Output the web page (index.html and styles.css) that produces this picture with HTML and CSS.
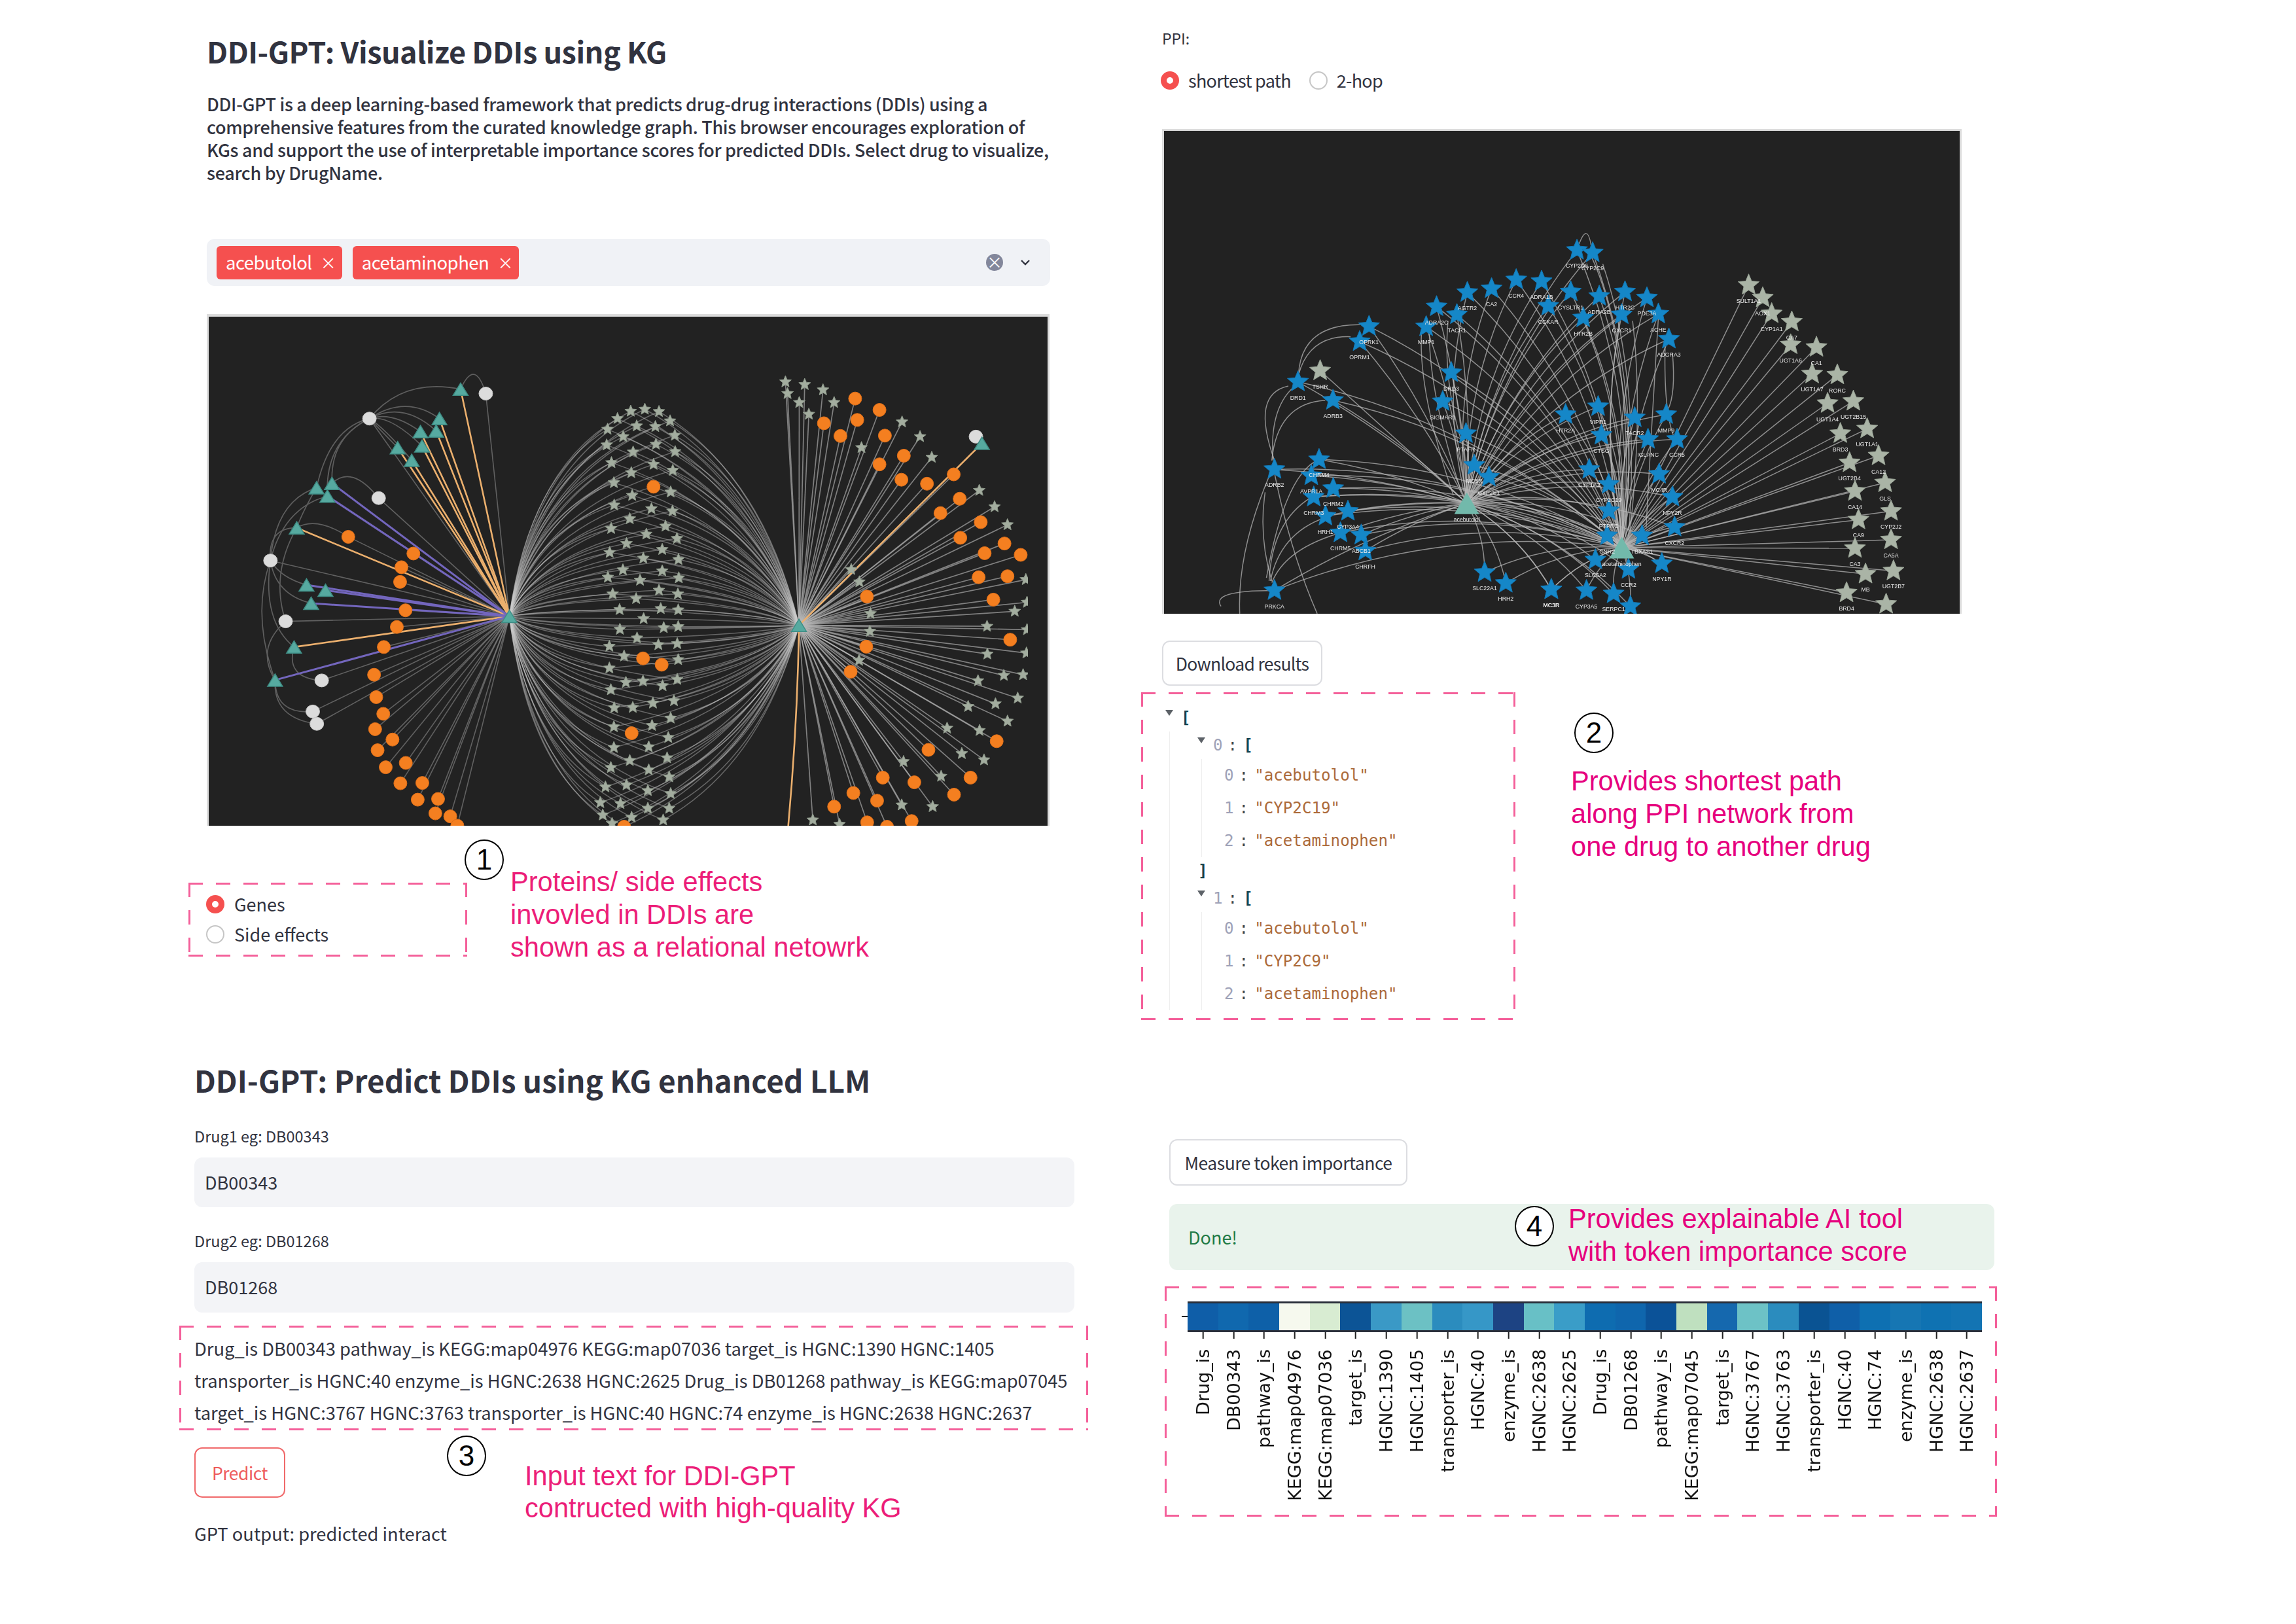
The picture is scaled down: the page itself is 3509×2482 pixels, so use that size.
FILE: index.html
```html
<!DOCTYPE html>
<html lang="en">
<head>
<meta charset="utf-8">
<title>DDI-GPT</title>
<link rel="stylesheet" href="styles.css">
</head>
<body>
<main class="page">

  <section class="cell cell-tl">
    <h2 class="title title-a">DDI-GPT: Visualize DDIs using KG</h2>
    <p class="intro">DDI-GPT is a deep learning-based framework that predicts drug-drug interactions (DDIs) using a<br>comprehensive features from the curated knowledge graph. This browser encourages exploration of<br>KGs and support the use of interpretable importance scores for predicted DDIs. Select drug to visualize,<br>search by DrugName.</p>
    <div class="select">
      <span class="tag">acebutolol<span class="tag-x">×</span></span>
      <span class="tag">acetaminophen<span class="tag-x">×</span></span>
      <span class="select-clear">×</span>
      <svg class="chevron" viewBox="0 0 16 10" width="16" height="10"><path d="M2 2l6 6 6-6" fill="none" stroke="#31333f" stroke-width="2.4"/></svg>
    </div>
    <div class="graph-frame graph-frame-a">
      <svg id="graph-genes" class="graph" viewBox="0 0 1282 778" width="1282" height="778"></svg>
    </div>
    <div class="annot-row annot-row-1">
      <div class="dash radios-box">
        <label class="radio"><span class="dot dot-on"></span>Genes</label>
        <label class="radio"><span class="dot"></span>Side effects</label>
      </div>
      <span class="num num-1">1</span>
      <p class="note note-a note-1">Proteins/ side effects<br>invovled in DDIs are<br>shown as a relational netowrk</p>
    </div>
  </section>

  <section class="cell cell-tr">
    <div class="ppi-label">PPI:</div>
    <div class="radio-line">
      <label class="radio"><span class="dot dot-on"></span>shortest path</label>
      <label class="radio"><span class="dot"></span>2-hop</label>
    </div>
    <div class="graph-frame graph-frame-b">
      <svg id="graph-ppi" class="graph" viewBox="0 0 1216 738" width="1216" height="738"></svg>
    </div>
    <button class="btn btn-download" type="button">Download results</button>
    <div class="annot-row annot-row-2">
      <div class="dash json">
        <div class="jrow jparent"><span class="jtoggle"></span><span class="jbr">[</span></div>
        <div class="jgroup jgroup-outer">
          <div class="jrow jparent"><span class="jtoggle"></span><span class="jidx">0</span><span class="jcolon">:</span><span class="jbr">[</span></div>
          <div class="jgroup jgroup-inner">
            <div class="jrow"><span class="jidx">0</span><span class="jcolon">:</span><span class="jstr">"acebutolol"</span></div>
            <div class="jrow"><span class="jidx">1</span><span class="jcolon">:</span><span class="jstr">"CYP2C19"</span></div>
            <div class="jrow"><span class="jidx">2</span><span class="jcolon">:</span><span class="jstr">"acetaminophen"</span></div>
          </div>
          <div class="jrow jclose"><span class="jbr">]</span></div>
          <div class="jrow jparent"><span class="jtoggle"></span><span class="jidx">1</span><span class="jcolon">:</span><span class="jbr">[</span></div>
          <div class="jgroup jgroup-inner">
            <div class="jrow"><span class="jidx">0</span><span class="jcolon">:</span><span class="jstr">"acebutolol"</span></div>
            <div class="jrow"><span class="jidx">1</span><span class="jcolon">:</span><span class="jstr">"CYP2C9"</span></div>
            <div class="jrow"><span class="jidx">2</span><span class="jcolon">:</span><span class="jstr">"acetaminophen"</span></div>
          </div>
        </div>
      </div>
      <span class="num num-2">2</span>
      <p class="note note-b note-2">Provides shortest path<br>along PPI network from<br>one drug to another drug</p>
    </div>
  </section>

  <section class="cell cell-bl">
    <h2 class="title title-b">DDI-GPT: Predict DDIs using KG enhanced LLM</h2>
    <div class="field-label field-label-1">Drug1 eg: DB00343</div>
    <div class="input">DB00343</div>
    <div class="field-label field-label-2">Drug2 eg: DB01268</div>
    <div class="input input-2">DB01268</div>
    <div class="dash prompt">Drug_is DB00343 pathway_is KEGG:map04976 KEGG:map07036 target_is HGNC:1390 HGNC:1405<br>transporter_is HGNC:40 enzyme_is HGNC:2638 HGNC:2625 Drug_is DB01268 pathway_is KEGG:map07045<br>target_is HGNC:3767 HGNC:3763 transporter_is HGNC:40 HGNC:74 enzyme_is HGNC:2638 HGNC:2637</div>
    <div class="predict-row">
      <div class="predict-col">
        <button class="btn btn-predict" type="button">Predict</button>
        <div class="output">GPT output: predicted interact</div>
      </div>
      <span class="num num-3">3</span>
      <p class="note note-a note-3">Input text for DDI-GPT<br>contructed with high-quality KG</p>
    </div>
  </section>

  <section class="cell cell-br">
    <button class="btn btn-measure" type="button">Measure token importance</button>
    <div class="done">
      <span class="done-text">Done!</span>
      <span class="num num-4">4</span>
      <p class="note note-b note-4">Provides explainable AI tool<br>with token importance score</p>
    </div>
    <div class="dash heat-box">
      <div class="heat-bar">
        <i style="background:#0f5ea8"></i><i style="background:#1068ae"></i><i style="background:#0e60a8"></i><i style="background:#f6f9ee"></i><i style="background:#d8ecd2"></i><i style="background:#0c5496"></i><i style="background:#3a99c6"></i><i style="background:#6cc1c4"></i><i style="background:#2b8cbe"></i><i style="background:#3697c7"></i><i style="background:#1d4383"></i><i style="background:#68c0c6"></i><i style="background:#3a9dc8"></i><i style="background:#0e6cb0"></i><i style="background:#0f66ad"></i><i style="background:#0b5298"></i><i style="background:#bfe0bf"></i><i style="background:#1568ae"></i><i style="background:#6dc2c6"></i><i style="background:#2b8cbe"></i><i style="background:#0a5393"></i><i style="background:#0f5fa8"></i><i style="background:#0e70b2"></i><i style="background:#1676b3"></i><i style="background:#0f72b2"></i><i style="background:#1374b3"></i>
      </div>
      <div class="heat-ticks">
        <span>Drug_is</span><span>DB00343</span><span>pathway_is</span><span>KEGG:map04976</span><span>KEGG:map07036</span><span>target_is</span><span>HGNC:1390</span><span>HGNC:1405</span><span>transporter_is</span><span>HGNC:40</span><span>enzyme_is</span><span>HGNC:2638</span><span>HGNC:2625</span><span>Drug_is</span><span>DB01268</span><span>pathway_is</span><span>KEGG:map07045</span><span>target_is</span><span>HGNC:3767</span><span>HGNC:3763</span><span>transporter_is</span><span>HGNC:40</span><span>HGNC:74</span><span>enzyme_is</span><span>HGNC:2638</span><span>HGNC:2637</span>
      </div>
    </div>
  </section>

</main>
<script src="script.js"></script>
</body>
</html>
```
FILE: styles.css
```css
* { box-sizing: border-box; }
html, body { margin: 0; padding: 0; background: #fff; }
body { font-family: "Noto Sans CJK SC", "Noto Sans", sans-serif; color: #31333f; }

.page {
  --pink: #f4609a;
  width: 3509px;
  height: 2482px;
  overflow: hidden;
  display: grid;
  grid-template-columns: 1744px 1fr;
  grid-template-rows: 1610px 1fr;
}

.cell { position: relative; min-width: 0; }
.cell-tl { padding: 48px 0 0 316px; }
.cell-tr { padding: 43px 0 0 32px; }
.cell-bl { padding: 10px 0 0 297px; }
.cell-br { padding: 131px 0 0 43px; }

.title {
  margin: 0;
  line-height: 60px;
  font-weight: 600;
  white-space: nowrap;
}
.title-a { font-size: 45px; letter-spacing: -0.5px; }
.title-b { font-size: 46px; }

.intro {
  margin: 33px 0 0;
  font-size: 27px;
  letter-spacing: -0.32px;
  line-height: 35px;
  font-weight: 500;
  white-space: nowrap;
}

/* multiselect */
.select {
  margin-top: 84px;
  width: 1289px;
  height: 72px;
  border-radius: 12px;
  background: #f0f2f6;
  display: flex;
  align-items: center;
  gap: 16px;
  padding: 0 30px 0 15px;
}
.tag {
  height: 51px;
  border-radius: 6px;
  background: #f5504f;
  color: #fff;
  font-size: 27.5px;
  letter-spacing: -0.5px;
  line-height: 49px;
  padding: 0 9px 0 14px;
  display: flex;
  gap: 13px;
}
.tag-x { font-size: 24px; letter-spacing: 0; }
.select-clear {
  margin-left: auto;
  width: 26px;
  height: 26px;
  border-radius: 50%;
  background: #83879b;
  color: #fff;
  font-size: 24px;
  line-height: 24px;
  text-align: center;
}
.chevron { margin-left: 10px; flex: none; }

/* graph frames */
.graph-frame { background: #222; border: 3px solid #dcdcdc; border-bottom: 0; }
.graph-frame-a { margin-top: 43px; width: 1288px; border-left-width: 3px; border-top-width: 4px; }
.graph-frame-b { margin-top: 60px; width: 1222px; }
.graph { display: block; filter: blur(0.45px); }

.e-thin  { fill: none; stroke: rgba(150,150,150,.55); stroke-width: 1.6; }
.e-field { fill: none; stroke: rgba(205,205,205,.4); stroke-width: 1.5; }
.e-fan   { fill: none; stroke: rgba(185,185,185,.62); stroke-width: 1.7; }
.e-curve { fill: none; stroke: #5e5e5e; stroke-width: 1.7; }
.e-gold  { fill: none; stroke: #ecb06e; stroke-width: 2.6; }
.e-purple{ fill: none; stroke: #7366bd; stroke-width: 3; }
.e-ppi   { fill: none; stroke: rgba(185,185,185,.72); stroke-width: 1.5; }

.n-tri    { fill: #56aaa0; stroke: #3f8d85; stroke-width: 1.5; }
.n-hub    { fill: #72b9ab; stroke: none; }
.n-white  { fill: #dcdcdc; stroke: #c9c9c9; stroke-width: 1; }
.n-orange { fill: #f47f20; stroke: #e0701a; stroke-width: 1; }
.n-sage   { fill: #a3ad9f; stroke: #8e998b; stroke-width: 1; }
.n-blue   { fill: #1587c8; stroke: #1378b6; stroke-width: 1; }
.n-sage-l { fill: #aab4a6; stroke: #98a295; stroke-width: 1; }
.n-label  { font: 8.8px "Liberation Sans", Arial, sans-serif; fill: #ececec; text-anchor: middle; }

/* dashed annotation boxes */
.dash {
  --on: 22px;
  --off: 42px;
  background:
    repeating-linear-gradient(90deg, var(--pink) 0 var(--on), transparent var(--on) var(--off)) left top / 100% 3px no-repeat,
    repeating-linear-gradient(90deg, var(--pink) 0 var(--on), transparent var(--on) var(--off)) left bottom / 100% 3px no-repeat,
    repeating-linear-gradient(180deg, var(--pink) 0 var(--on), transparent var(--on) var(--off)) left top / 3px 100% no-repeat,
    repeating-linear-gradient(180deg, var(--pink) 0 var(--on), transparent var(--on) var(--off)) right top / 3px 100% no-repeat;
}

.annot-row { position: relative; display: flex; align-items: flex-start; }
.annot-row-1 { margin: 87px 0 0 -28px; }
.annot-row-2 { margin: 10px 0 0 -32px; }

.num {
  position: absolute;
  width: 60px;
  height: 62px;
  border: 2.5px solid #000;
  border-radius: 50%;
  background: #fff;
  color: #000;
  font: 44px/57px "Liberation Sans", Arial, sans-serif;
  text-align: center;
}
.num-1 { left: 422px; top: -66px; }
.num-2 { left: 662px; top: 31px; }
.num-3 { left: 386px; top: -18px; }
.num-4 { left: 528px; top: 3px; }

.note {
  margin: 0;
  font-family: "Liberation Sans", Arial, sans-serif;
  font-size: 41.6px;
  line-height: 50px;
  white-space: nowrap;
}
.note-a { color: #ec1e79; }
.note-b { color: #e6007e; }
.note-1 { margin: -26px 0 0 66px; }
.note-2 { margin: 111px 0 0 85px; }
.note-3 { margin: 19px 0 0 366px; line-height: 49px; }
.note-4 { position: absolute; left: 610px; top: -2px; }

/* radios */
.radios-box { width: 426px; height: 113px; padding: 19px 0 0 27px; display: flex; flex-direction: column; gap: 18px; }
.radio { display: flex; align-items: center; gap: 15px; font-size: 27px; line-height: 28px; height: 28px; white-space: nowrap; }
.dot { width: 28px; height: 28px; border-radius: 50%; border: 2px solid #c6c6c6; background: #fff; flex: none; }
.dot-on { border: 9px solid #f5504f; background: #fff; }
.ppi-label { font-size: 23px; line-height: 30px; }
.radio-line { margin-top: 36px; display: flex; gap: 28px; letter-spacing: -0.75px; }
.radio-line .radio { gap: 14px; }
.radio-line .dot-on { margin-left: -2px; }

/* buttons */
.btn {
  display: block;
  font-family: inherit;
  font-size: 26.5px;
  letter-spacing: -0.5px;
  color: #31333f;
  background: #fff;
  border: 2px solid #dcdde1;
  border-radius: 12px;
  padding: 0;
  white-space: nowrap;
}
.btn-download { margin-top: 41px; width: 245px; height: 69px; letter-spacing: -0.7px; }
.btn-measure { width: 364px; height: 71px; }
.btn-predict { width: 139px; height: 77px; color: #ee5c5c; border-color: #f0696a; }

/* json viewer */
.json { width: 572px; height: 501px; padding: 18px 0 0 43px; font: 24.2px "DejaVu Sans Mono", "Liberation Mono", monospace; }
.jrow { display: flex; align-items: center; height: 50px; white-space: nowrap; }
.jparent, .jclose { height: 42px; }
.jclose { margin-left: -5px; }
.jgroup { border-left: 1px solid #eeeeee; }
.jgroup-outer { padding-left: 48px; }
.jgroup-inner { padding-left: 34px; }
.jtoggle {
  width: 0; height: 0; flex: none;
  margin: -16px 12px 0 -6px;
  border-left: 6px solid transparent;
  border-right: 6px solid transparent;
  border-top: 9px solid #5d6268;
}
.jbr { color: #14424f; font-weight: 700; }
.jidx { color: #9ea2b8; }
.jcolon { margin: 0 9px 0 8px; color: #444; }
.jstr { color: #ac6a3a; }

/* predict form */
.field-label { font-size: 23.5px; line-height: 30px; white-space: nowrap; }
.field-label-1 { margin-top: 41px; }
.field-label-2 { margin-top: 36px; }
.input {
  margin-top: 18px;
  width: 1345px;
  height: 76px;
  border-radius: 12px;
  background: #f3f4f7;
  padding-left: 16px;
  font-size: 27px;
  line-height: 76px;
}
.input-2 { height: 77px; line-height: 75px; }
.prompt {
  margin: 20px 0 0 -23px;
  width: 1389px;
  height: 160px;
  padding: 10px 0 0 23px;
  font-size: 27.35px;
  line-height: 49px;
  white-space: nowrap;
}
.predict-row { position: relative; margin-top: 26px; display: flex; align-items: flex-start; }
.predict-col { flex: none; width: 139px; }
.output { margin-top: 39px; font-size: 27.3px; line-height: 30px; white-space: nowrap; }

/* token importance */
.done {
  position: relative;
  margin-top: 28px;
  width: 1261px;
  height: 101px;
  border-radius: 12px;
  background: #e9f3ec;
  padding-left: 29px;
  display: flex;
  align-items: center;
}
.done-text { color: #1f7a45; font-size: 27px; }
.heat-box { margin: 25px 0 0 -7px; width: 1272px; height: 352px; padding: 23px 0 0 35px; }
.heat-bar {
  position: relative;
  width: 1214px;
  height: 47px;
  display: grid;
  grid-template-columns: repeat(26, 1fr);
  border-top: 3px solid #2a2f3a;
  border-bottom: 3px solid #2a2f3a;
}
.heat-bar::before {
  content: "";
  position: absolute;
  left: -9px;
  top: 19px;
  width: 9px;
  height: 2px;
  background: #222;
}
.heat-ticks {
  width: 1214px;
  margin-top: 26px;
  display: grid;
  grid-template-columns: repeat(26, 1fr);
}
.heat-ticks span {
  position: relative;
  height: 240px;
  display: flex;
  justify-content: flex-end;
  align-items: center;
  font: 27px/1 "DejaVu Sans", sans-serif;
  color: #111;
  writing-mode: vertical-rl;
  transform: rotate(180deg);
}
.heat-ticks span::before {
  content: "";
  position: absolute;
  left: 50%;
  bottom: -26px;
  width: 2px;
  height: 10px;
  margin-left: -1px;
  background: #222;
}
```
FILE: script.js
```js
(function () {
  var NS = 'http://www.w3.org/2000/svg';
  function add(parent, tag, attrs, text) {
    var e = document.createElementNS(NS, tag);
    for (var k in attrs) e.setAttribute(k, attrs[k]);
    if (text) e.textContent = text;
    parent.appendChild(e);
    return e;
  }
  function starPath(x, y, r) {
    var d = '';
    for (var i = 0; i < 10; i++) {
      var a = -Math.PI / 2 + i * Math.PI / 5, q = i % 2 ? r * 0.45 : r;
      d += (i ? 'L' : 'M') + (x + q * Math.cos(a)).toFixed(1) + ' ' + (y + q * Math.sin(a)).toFixed(1);
    }
    return d + 'Z';
  }
  function triPath(x, y, w, h) {
    return 'M' + x + ' ' + (y - h / 2) + 'L' + (x + w / 2) + ' ' + (y + h / 2) + 'L' + (x - w / 2) + ' ' + (y + h / 2) + 'Z';
  }
  function pathOf(a, c, b) {
    return 'M' + a[0].toFixed(1) + ' ' + a[1].toFixed(1) + 'Q' + c[0].toFixed(1) + ' ' + c[1].toFixed(1) + ' ' + b[0].toFixed(1) + ' ' + b[1].toFixed(1);
  }

  /* ---------- genes / side effects network ---------- */
  (function () {
    var svg = document.getElementById('graph-genes');
    var clip = add(add(svg, 'defs', {}), 'clipPath', { id: 'clipA' });
    add(clip, 'rect', { x: 0, y: 0, width: 1252, height: 778 });
    var root = add(svg, 'g', { 'clip-path': 'url(#clipA)' });
    var edges = add(root, 'g', {}), nodes = add(root, 'g', {});
    function L(p) { return [300 + p[0] * 0.4145 - 318, 480 + p[1] * 0.5104 - 484]; }
    function R(p) { return [900 + p[0] * 0.4592 - 318, 480 + p[1] * 0.5104 - 484]; }
    var h1 = L([1152, 905]), h2 = R([697, 932]);

    var gold = [[972,225],[894,313],[882,350],[824,352],[830,395],[740,400],[792,438],[368,640],[358,997]].map(L);
    var purple = [[498,507],[481,545],[404,811],[474,827],[421,866],[288,1096]].map(L);
    var extraTri = L([441,520]);
    var white = [[1065,238],[636,313],[670,551],[271,738],[327,920],[460,1097],[427,1190],[442,1227]].map(L);
    var orangeL = [[558,667],[798,717],[754,758],[749,802],[769,887],[737,937],[689,997],[653,1080],[661,1147],[687,1197],[657,1243],[721,1274],[666,1306],[696,1357],[770,1344],[750,1405],[831,1404],[814,1454],[889,1452],[879,1495],[934,1504],[960,1532]].map(L);
    var field = [[137,291],[184,285],[231,292],[268,320],[93,313],[60,345],[157,335],[219,337],[284,363],[112,367],[57,392],[145,413],[221,390],[285,412],[73,445],[213,450],[277,468],[139,475],[81,505],[270,533],[142,543],[82,572],[206,583],[276,590],[134,613],[72,642],[253,635],[189,659],[291,672],[123,687],[67,714],[242,705],[179,731],[296,735],[111,766],[61,788],[242,769],[168,797],[297,790],[77,838],[231,827],[294,838],[155,852],[100,885],[237,882],[295,886],[180,912],[101,944],[247,939],[295,936],[158,970],[66,995],[229,990],[292,987],[115,1024],[295,1035],[66,1060],[121,1103],[178,1099],[292,1094],[243,1113],[71,1125],[82,1179],[144,1178],[211,1165],[281,1158],[81,1236],[208,1232],[270,1210],[81,1298],[197,1296],[262,1268],[134,1337],[258,1329],[71,1358],[197,1365],[265,1386],[53,1416],[123,1410],[194,1427],[270,1436],[36,1463],[103,1466],[194,1480],[265,1480],[44,1500],[140,1507],[245,1515],[75,1525]].map(R);
    var fieldO = [[213,517],[178,1031],[240,1050],[140,1255],[115,1535]].map(R);
    var starsR = [[652,203],[716,211],[777,227],[659,238],[698,265],[814,265],[730,300],[1040,323],[1100,367],[905,400],[1139,429],[1297,528],[1348,577],[1391,631],[871,765],[898,802],[1452,795],[935,897],[1415,890],[1323,935],[933,950],[1456,863],[1456,945],[1324,1018],[1454,1015],[897,1037],[1293,1098],[1379,1082],[1443,1080],[1425,1150],[1260,1175],[1351,1167],[1391,1219],[1190,1240],[1298,1247],[1239,1316],[1313,1335],[1045,1340],[1170,1384],[1039,1470],[1142,1475],[743,1515],[832,1528]].map(R);
    var orangeR = [[884,253],[965,287],[780,327],[891,317],[835,365],[983,364],[1046,424],[965,450],[1038,496],[1123,508],[1212,480],[1232,553],[1168,596],[1302,623],[1234,670],[1381,687],[1315,716],[1435,721],[1295,788],[1391,785],[923,846],[1344,855],[921,996],[1400,975],[869,1071],[1355,1279],[1128,1305],[976,1388],[1268,1388],[1081,1402],[878,1434],[1213,1439],[957,1457],[814,1475],[924,1522],[1072,1518],[990,1535]].map(R);
    var whiteR = R([1286,367]), triR = R([1306,387]);

    function line(a, b, cls) { add(edges, 'path', { d: 'M' + a[0].toFixed(1) + ' ' + a[1].toFixed(1) + 'L' + b[0].toFixed(1) + ' ' + b[1].toFixed(1), 'class': cls }); }
    function bow(hub, s, fx, fy) {
      add(edges, 'path', { d: pathOf(hub, [hub[0] + (s[0] - hub[0]) * fx, hub[1] + (s[1] - hub[1]) * fy], s), 'class': 'e-field' });
    }
    field.concat(fieldO).forEach(function (s) { bow(h1, s, 0.2, 0.75); bow(h2, s, 0.28, 0.72); });
    starsR.concat(orangeR).forEach(function (s) { line(h2, s, 'e-fan'); });
    white.concat(orangeL).forEach(function (s) { line(h1, s, 'e-thin'); });
    [
      [[636,313],[894,313],[770,240]],[[636,313],[882,350],[760,260]],[[636,313],[824,352],[720,290]],[[636,313],[830,395],[710,300]],
      [[636,313],[740,400],[680,350]],[[636,313],[792,438],[690,340]],[[636,313],[498,507],[490,370]],[[636,313],[441,520],[490,340]],
      [[636,313],[481,545],[470,380]],[[636,313],[972,225],[760,190]],[[972,225],[1065,238],[1025,130]],[[498,507],[670,551],[570,450]],
      [[368,640],[558,667],[440,605]],[[271,738],[368,640],[260,640]],[[271,738],[441,520],[290,560]],[[271,738],[481,545],[320,580]],
      [[271,738],[404,811],[310,790]],[[271,738],[421,866],[290,840]],[[271,738],[358,997],[240,920]],[[271,738],[288,1096],[200,900]],
      [[327,920],[368,640],[270,780]],[[327,920],[288,1096],[215,1000]],[[358,997],[460,1097],[325,1090]],[[288,1096],[427,1190],[290,1200]],
      [[288,1096],[442,1227],[280,1210]],[[368,640],[441,520],[390,590]]
    ].forEach(function (c) { add(edges, 'path', { d: pathOf(L(c[0]), L(c[2]), L(c[1])), 'class': 'e-curve' }); });
    gold.forEach(function (s) { line(h1, s, 'e-gold'); });
    purple.forEach(function (s) { line(h1, s, 'e-purple'); });
    line(h2, triR, 'e-gold');
    add(edges, 'path', { d: pathOf(h2, R([692, 1230]), R([660, 1545])), 'class': 'e-gold' });

    field.concat(starsR).forEach(function (s) { add(nodes, 'path', { d: starPath(s[0], s[1], 9.5), 'class': 'n-sage' }); });
    orangeL.concat(fieldO, orangeR).forEach(function (s) { add(nodes, 'ellipse', { cx: s[0], cy: s[1], rx: 10, ry: 10, 'class': 'n-orange' }); });
    white.concat([whiteR]).forEach(function (s) { add(nodes, 'ellipse', { cx: s[0], cy: s[1], rx: 10.5, ry: 10, 'class': 'n-white' }); });
    gold.concat(purple, [extraTri, triR, h1, h2]).forEach(function (s) { add(nodes, 'path', { d: triPath(s[0], s[1], 23, 19), 'class': 'n-tri' }); });
  })();

  /* ---------- PPI network ---------- */
  (function () {
    var svg = document.getElementById('graph-ppi');
    var edges = add(svg, 'g', {}), nodes = add(svg, 'g', {}), labels = add(svg, 'g', {});
    function A(p) { return [1760 + p[0] * 0.4082 - 1779, 190 + p[1] * 0.4847 - 200]; }
    function B(p) { return [2350 + p[0] * 0.4145 - 1779, 190 + p[1] * 0.4847 - 200]; }
    var h1 = A([1180,1195]), h2 = B([310,1335]);
    var blue = [];
    [[814,637,'OPRK1'],[779,685,'OPRM1'],[548,812,'DRD1'],[679,870,'ADRB3'],[1067,575,'ADRA2C'],[1028,638,'MMP1'],[1143,600,'TACR1'],[1182,530,'AGTR2'],[1273,518,'CA2'],[1365,490,'CCR4'],[1460,495,'ADRA1B'],[1485,573,'CCKAR'],[1122,783,'DRD3'],[1090,874,'SIGMAR1'],[1177,975,'PTAFR'],[1208,1075,'MC5R'],[1263,1112,'CYP2E1'],[460,1088,'ADRB2'],[627,1057,'CHRM4'],[598,1108,'AVPR1A'],[680,1148,'CHRM2'],[607,1175,'CHRM3'],[735,1220,'CYP3A4'],[651,1235,'HRH1'],[707,1288,'CHRM5'],[785,1295,'ABCB1'],[800,1345,'CHRFH'],[1247,1413,'SLC22A1'],[1326,1447,'HRH2'],[1497,1467,'MC3R'],[460,1470,'PRKCA']].forEach(function (n) { blue.push({ p: A(n), t: n[2] }); });
    [[145,397,'CYP2D6'],[203,405,'CYP2C9'],[122,528,'CYSLTR1'],[227,542,'ADRA2B'],[322,528,'HTR2C'],[168,610,'HTR2B'],[310,600,'CXCR1'],[403,547,'PDE3A'],[445,598,'ACHE'],[484,677,'ADGRA3'],[103,915,'HTR2A'],[223,890,'VIPR1'],[358,925,'TACR2'],[474,915,'MMP9'],[235,980,'CTSG'],[407,993,'IGLANC'],[514,993,'CCR5'],[190,1088,'CYP1A2'],[262,1135,'CYP2C19'],[448,1103,'MC4R'],[497,1175,'NPY2R'],[262,1218,'PTPRC'],[505,1270,'CXCR2'],[256,1297,'CNR2'],[385,1297,'TBXAS1'],[213,1373,'SLC6A2'],[335,1403,'CCR2'],[458,1385,'NPY1R'],[50,1467,'MC3R'],[180,1470,'CYP3A5'],[280,1480,'SERPC1'],[342,1520,'']].forEach(function (n) { blue.push({ p: B(n), t: n[2] }); });
    var sage = [];
    [[778,507,'SULT1A1'],[830,547,'AOX1'],[863,597,'CYP1A1'],[937,623,'CA7'],[933,695,'UGT1A6'],[1028,703,'CA1'],[1105,790,'RORC'],[1012,787,'UGT1A7'],[1164,873,'UGT2B15'],[1069,880,'UGT1A4'],[1215,960,'UGT1A1'],[1116,975,'BRD3'],[1257,1045,'CA12'],[1150,1067,'UGT2B4'],[1281,1130,'GLS'],[1170,1157,'CA14'],[1303,1220,'CYP2J2'],[1183,1247,'CA9'],[1303,1310,'CA5A'],[1170,1337,'CA3'],[1209,1418,'MB'],[1312,1408,'UGT2B7'],[1139,1477,'BRD4'],[1285,1513,'']].forEach(function (n) { sage.push({ p: B(n), t: n[2] }); });
    var tshr = { p: A([631,777]), t: 'TSHR' };

    function toHub(hub, s, k) {
      var mx = (hub[0] + s[0]) / 2, my = (hub[1] + s[1]) / 2;
      var dx = s[0] - hub[0], dy = s[1] - hub[1];
      add(edges, 'path', { d: pathOf(hub, [mx - dy * k, my + dx * k], s), 'class': 'e-ppi' });
    }
    blue.forEach(function (n) {
      toHub(h1, n.p, n.p[0] > h1[0] ? -0.13 : 0.06);
      toHub(h2, n.p, n.p[0] < h2[0] ? 0.13 : -0.1);
    });
    toHub(h1, tshr.p, 0);
    sage.forEach(function (n) { toHub(h2, n.p, 0); });
    [
      [A,[550,790],[560,630],[780,632]],[A,[550,790],[590,665],[745,670]],[A,[512,825],[370,850],[460,1060]],[A,[650,870],[470,880],[450,1060]],
      [A,[530,830],[440,900],[455,1060]],[A,[1010,660],[1000,850],[1130,1170]],[A,[1040,660],[1040,850],[1160,1160]],[A,[1110,620],[1090,800],[1160,1000]],
      [A,[425,1160],[400,1300],[450,1440]],[A,[440,1110],[320,1350],[330,1543]],[A,[455,1470],[220,1470],[260,1520]],[A,[627,1057],[500,1100],[430,1430]],
      [A,[600,1175],[450,1250],[440,1440]],[A,[650,1240],[480,1290],[445,1440]],[A,[700,1290],[500,1340],[450,1445]],[A,[460,1100],[520,1350],[620,1543]],
      [B,[145,397],[185,290],[200,400]],[B,[200,420],[350,700],[325,1300]],[B,[240,440],[380,800],[335,1300]],[B,[445,610],[420,950],[400,1270]],
      [B,[470,700],[465,900],[500,980]],[B,[497,720],[510,850],[480,900]],[B,[350,620],[390,900],[340,1290]]
    ].forEach(function (c) { add(edges, 'path', { d: pathOf(c[0](c[1]), c[0](c[2]), c[0](c[3])), 'class': 'e-ppi' }); });

    function star(n, cls) {
      add(nodes, 'path', { d: starPath(n.p[0], n.p[1], 17), 'class': cls });
      if (n.t) add(labels, 'text', { x: n.p[0], y: n.p[1] + 27, 'class': 'n-label' }, n.t);
    }
    blue.forEach(function (n) { star(n, 'n-blue'); });
    sage.forEach(function (n) { star(n, 'n-sage-l'); });
    star(tshr, 'n-sage-l');
    add(nodes, 'path', { d: triPath(h1[0], h1[1], 38, 33), 'class': 'n-hub' });
    add(nodes, 'path', { d: triPath(h2[0], h2[1], 38, 33), 'class': 'n-hub' });
    add(labels, 'text', { x: h1[0], y: h1[1] + 28, 'class': 'n-label' }, 'acebutolol');
    add(labels, 'text', { x: h2[0], y: h2[1] + 28, 'class': 'n-label' }, 'acetaminophen');
  })();
})();
```
